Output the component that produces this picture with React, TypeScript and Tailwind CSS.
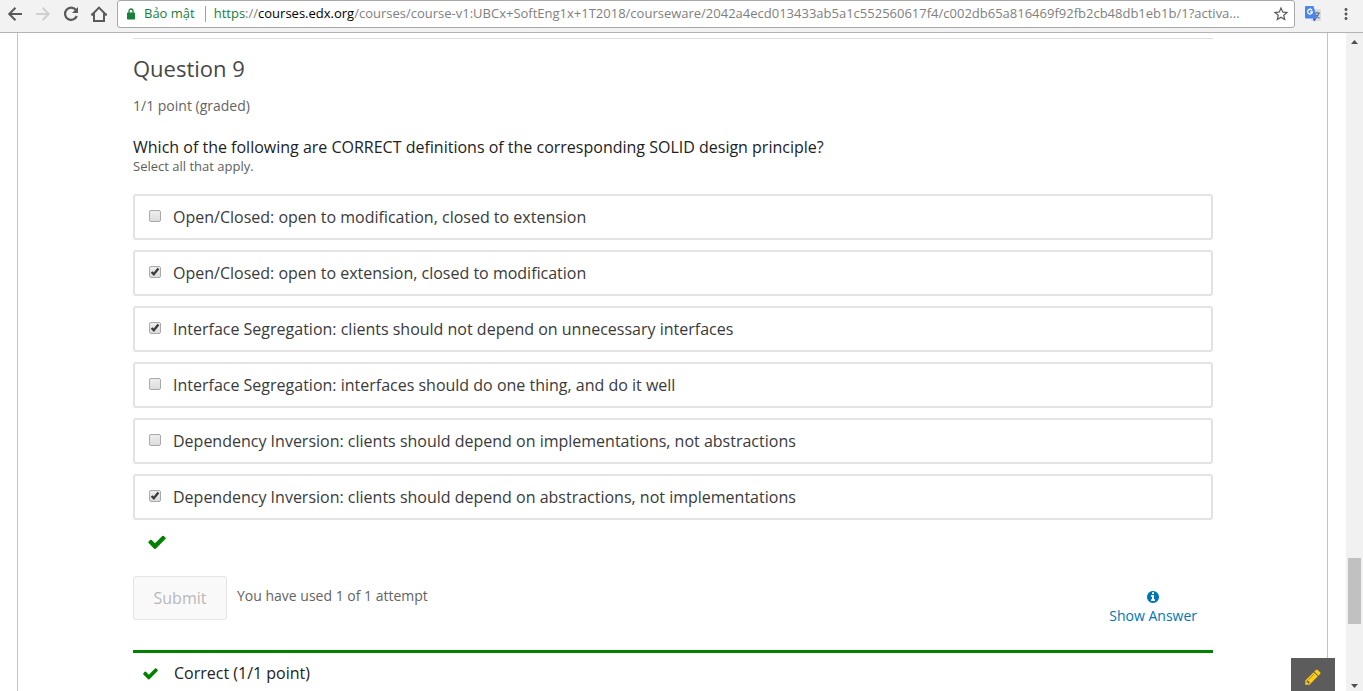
import React, { useState } from 'react';
import { MdStarBorder, MdMoreVert } from 'react-icons/md';

const options = [
  { id: 'a', text: 'Open/Closed: open to modification, closed to extension', checked: false },
  { id: 'b', text: 'Open/Closed: open to extension, closed to modification', checked: true },
  { id: 'c', text: 'Interface Segregation: clients should not depend on unnecessary interfaces', checked: true },
  { id: 'd', text: 'Interface Segregation: interfaces should do one thing, and do it well', checked: false },
  { id: 'e', text: 'Dependency Inversion: clients should depend on implementations, not abstractions', checked: false },
  { id: 'f', text: 'Dependency Inversion: clients should depend on abstractions, not implementations', checked: true },
];

function CheckIcon({ className }: { className: string }) {
  return (
    <svg viewBox="0 0 1792 1792" className={className} fill="currentColor" aria-hidden="true">
      <path d="M1671 566q0 40-28 68l-724 724-136 136q-28 28-68 28t-68-28l-136-136-362-362q-28-28-28-68t28-68l136-136q28-28 68-28t68 28l294 295 656-657q28-28 68-28t68 28l136 136q28 28 28 68z" />
    </svg>
  );
}

function InfoIcon() {
  return (
    <svg viewBox="0 0 1792 1792" className="size-[14px]" fill="currentColor" aria-hidden="true">
      <path d="M1152 1376v-160q0-14-9-23t-23-9h-96v-512q0-14-9-23t-23-9h-320q-14 0-23 9t-9 23v160q0 14 9 23t23 9h96v320h-96q-14 0-23 9t-9 23v160q0 14 9 23t23 9h448q14 0 23-9t9-23zm-128-896v-160q0-14-9-23t-23-9h-192q-14 0-23 9t-9 23v160q0 14 9 23t23 9h192q14 0 23-9t9-23zm640 416q0 209-103 385.5t-279.5 279.5-385.5 103-385.5-103-279.5-279.5-103-385.5 103-385.5 279.5-279.5 385.5-103 385.5 103 279.5 279.5 103 385.5z" />
    </svg>
  );
}

function PencilIcon() {
  return (
    <svg viewBox="0 0 1792 1792" className="size-[18px]" fill="currentColor" aria-hidden="true">
      <path d="M491 1536l91-91-235-235-91 91v107h128v128h107zm523-928q0-22-22-22-10 0-17 7l-542 542q-7 7-7 17 0 22 22 22 10 0 17-7l542-542q7-7 7-17zm-54-192l416 416-832 832h-416v-416zm683 96q0 53-37 90l-166 166-416-416 166-165q36-38 90-38 53 0 91 38l235 234q37 39 37 91z" />
    </svg>
  );
}

function BackIcon() {
  return (
    <svg viewBox="0 0 20 20" className="size-5" fill="none" stroke="currentColor" strokeWidth="2" aria-hidden="true">
      <path d="M17 10H4.500M10.500 3.700 4.200 10l6.300 6.300" />
    </svg>
  );
}

function ForwardIcon() {
  return (
    <svg viewBox="0 0 20 20" className="size-5" fill="none" stroke="currentColor" strokeWidth="2" aria-hidden="true">
      <path d="M3 10h12.500M9.500 3.700l6.300 6.300-6.300 6.300" />
    </svg>
  );
}

function ReloadIcon() {
  return (
    <svg viewBox="0 0 20 20" className="size-5" aria-hidden="true">
      <path d="M14.800 5.800A6.100 6.100 0 1 0 15.800 12" fill="none" stroke="currentColor" strokeWidth="2.200" />
      <path d="M17 3v6h-6z" fill="currentColor" />
    </svg>
  );
}

function HomeIcon() {
  return (
    <svg viewBox="0 0 18 18" className="size-[18px]" fill="none" stroke="currentColor" strokeWidth="2" aria-hidden="true">
      <path d="M1.500 10.200 9 2.600l7.500 7.600M1 9.500h3V16h10V9.500h3" />
    </svg>
  );
}

function LockIcon() {
  return (
    <svg viewBox="0 0 8 12" className="h-3 w-2 shrink-0 text-[#188038]" aria-hidden="true">
      <rect x="0" y="4.500" width="8" height="7" rx="0.800" fill="currentColor" />
      <path d="M2 5V3a2 2 0 0 1 4 0v2" fill="none" stroke="currentColor" strokeWidth="1.300" />
    </svg>
  );
}

function TranslateIcon() {
  return (
    <svg viewBox="0 0 16 16" className="size-4" aria-hidden="true">
      <rect x="6" y="3" width="10" height="12" rx="1" fill="#dcdcdc" />
      <path d="M9 7h6M12 5.800V7M14 7c-.5 2-2 4-3.500 5M10.500 8.500c.8 1.500 2.300 3 4 3.700" stroke="#5b7485" strokeWidth="1.200" fill="none" />
      <path d="M1 0h7.500L12 12.500H1a1 1 0 0 1-1-1V1a1 1 0 0 1 1-1z" fill="#4a86ee" />
      <path d="M8 12.500h3.500L9 15.500z" fill="#3a45c0" />
      <path d="M7 4.300A2.400 2.400 0 1 0 7.400 6H5.200" stroke="#fff" strokeWidth="1.300" fill="none" />
    </svg>
  );
}

function Toolbar() {
  return (
    <header className="flex h-[33px] shrink-0 items-start border-b border-[#b3b3b3] bg-[#f2f2f2] text-[#5a5a5a]">
      <nav className="flex h-7 w-[117px] shrink-0 items-center gap-2 pl-[5px]">
        <button type="button" aria-label="Back"><BackIcon /></button>
        <button type="button" aria-label="Forward" disabled className="text-[#d0d0d0]"><ForwardIcon /></button>
        <button type="button" aria-label="Reload"><ReloadIcon /></button>
        <button type="button" aria-label="Home" className="pl-px"><HomeIcon /></button>
      </nav>
      <div className="flex h-7 min-w-0 flex-1 items-center rounded-[3px] border border-[#a8a8a8] bg-white pr-1 pl-[9px] text-[13px]">
        <LockIcon />
        <span className="ml-[9px] shrink-0 text-[#188038]">Bảo mật</span>
        <span className="mr-2 ml-[10px] h-4 w-px shrink-0 bg-[#a0a0a0]" />
        <a href="#problem" className="min-w-0 flex-1 truncate text-[#808080]">
          <span className="text-[#188038]">https</span>://<span className="text-black">courses.edx.org</span>/courses/course-v1:UBCx+SoftEng1x+1T2018/courseware/2042a4ecd013433ab5a1c552560617f4/c002db65a816469f92fb2cb48db1eb1b/1?activa...
        </a>
        <button type="button" aria-label="Bookmark" className="ml-2 shrink-0"><MdStarBorder className="size-[18px]" /></button>
      </div>
      <div className="flex h-7 w-[68px] shrink-0 items-center justify-between pr-[8px] pl-[10px]">
        <button type="button" aria-label="Translate"><TranslateIcon /></button>
        <button type="button" aria-label="Menu"><MdMoreVert className="size-[18px]" /></button>
      </div>
    </header>
  );
}

function Option({ id, text, initial }: { id: string; text: string; initial: boolean }) {
  const [checked, setChecked] = useState(initial);
  return (
    <label htmlFor={id} className="flex h-[46px] items-center gap-3 rounded-[3px] border-2 border-[#e3e3e3] pl-[14px]">
      <span className="mb-[2px] grid size-3 shrink-0 place-items-center">
        <input
          id={id}
          type="checkbox"
          checked={checked}
          onChange={() => setChecked(!checked)}
          className="col-start-1 row-start-1 size-3 appearance-none rounded-[2px] border border-[#a9a9a9] bg-linear-to-b from-[#eeeeee] to-[#dcdcdc]"
        />
        {checked && (
          <svg viewBox="0 0 12 12" className="pointer-events-none col-start-1 row-start-1 size-3" aria-hidden="true">
            <path d="M2.600 6 4.800 8.300 9.400 2.600" fill="none" stroke="#3c3c3c" strokeWidth="2.400" />
          </svg>
        )}
      </span>
      <span>{text}</span>
    </label>
  );
}

function Scrollbar() {
  return (
    <div className="flex w-[17px] shrink-0 flex-col items-center bg-[#f1f1f1]" aria-hidden="true">
      <svg viewBox="0 0 17 17" className="size-[17px]"><path d="M5 11 8.500 7 12 11z" fill="#505050" /></svg>
      <div className="flex-1" />
      <div className="h-[66px] w-[13px] bg-[#c1c1c1]" />
      <div className="h-[50px]" />
      <svg viewBox="0 0 17 17" className="size-[17px]"><path d="M5 10h7l-3.500 4z" fill="#505050" /></svg>
    </div>
  );
}

export default function App() {
  return (
    <div className="flex h-screen flex-col overflow-hidden bg-white font-['Open_Sans','Noto_Sans',sans-serif]">
      <Toolbar />
      <div className="flex min-h-0 flex-1">
        <main id="problem" className="mr-[18px] ml-[17px] min-w-0 flex-1 overflow-hidden border-x border-[#c2c2c2] pr-[114px] pl-[115px] pt-[5px] text-base text-[#3a3a3a]">
          <section className="border-t border-[#dddddd]">
            <h1 className="mt-[15px] text-[22px] leading-7 text-[#474747]">Question 9</h1>
            <p className="mt-[14px] text-sm leading-5 text-[#646464]">1/1 point (graded)</p>
            <h2 className="mt-5 text-base leading-[22px] text-[#222222]">
              Which of the following are CORRECT definitions of the corresponding SOLID design principle?
            </h2>
            <p className="text-[13px] leading-4 text-[#5e5e5e]">Select all that apply.</p>
            <div className="mt-5 flex flex-col gap-[10px]">
              {options.map((o) => (
                <Option key={o.id} id={o.id} text={o.text} initial={o.checked} />
              ))}
            </div>
            <CheckIcon className="mt-3 ml-[14px] size-5 text-[#008100]" />
            <div className="mt-6 flex items-start">
              <button type="button" disabled className="h-11 w-[94px] rounded-[3px] border border-[#e4e4e4] bg-[#f9f9f9] text-[#b8b8b8]">
                Submit
              </button>
              <p className="mt-[10px] ml-[10px] flex-1 text-sm leading-5 text-[#646464]">You have used 1 of 1 attempt</p>
              <button type="button" className="mt-[14px] mr-4 flex flex-col items-center gap-[2px] text-sm leading-5 text-[#0075b4]">
                <InfoIcon />
                Show Answer
              </button>
            </div>
            <div className="mt-6 flex items-center gap-[15px] border-t-[3px] border-[#008100] pt-2 pl-[9px] text-[#222222]">
              <CheckIcon className="size-[17px] text-[#008100]" />
              <p className="leading-6">Correct (1/1 point)</p>
            </div>
          </section>
        </main>
        <Scrollbar />
      </div>
      <button type="button" aria-label="Edit notes" className="fixed right-7 bottom-0 flex h-[33px] w-11 items-center justify-center bg-[#5c5c5c] pt-1 text-[#fdcb12]">
        <PencilIcon />
      </button>
    </div>
  );
}
